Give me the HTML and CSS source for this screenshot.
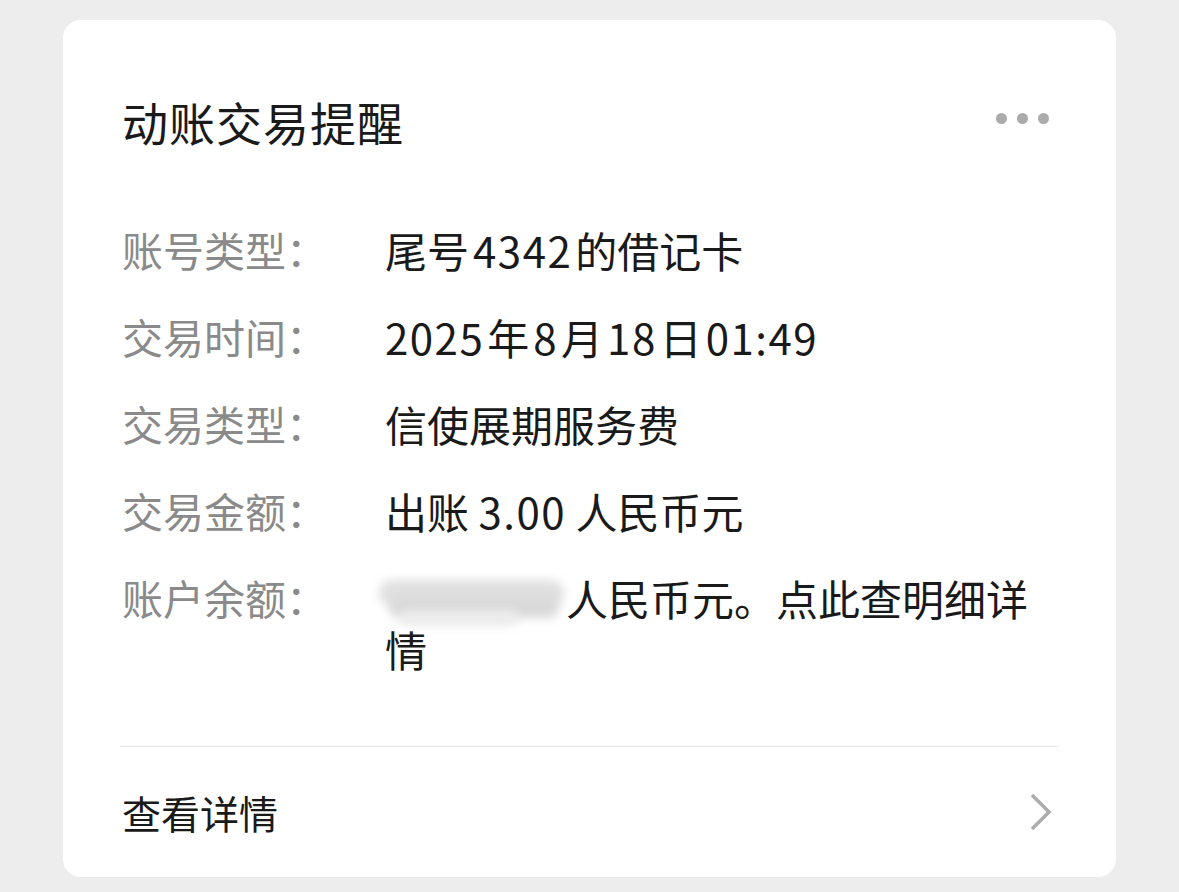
FILE: index.html
```html
<!DOCTYPE html>
<html lang="zh-CN">
<head>
<meta charset="utf-8">
<link rel="stylesheet" href="styles.css">
</head>
<body>
<div class="card">
  <div class="head">
    <div class="title">动账交易提醒</div>
    <div class="dots"><span></span><span></span><span></span></div>
  </div>
  <div class="rows">
    <div class="row"><div class="label">账号类型：</div><div class="value">尾号<span class="num">4342</span>的借记卡</div></div>
    <div class="row"><div class="label">交易时间：</div><div class="value"><span class="num first">2025</span>年<span class="num">8</span>月<span class="num">18</span>日<span class="num last">01:49</span></div></div>
    <div class="row"><div class="label">交易类型：</div><div class="value">信使展期服务费</div></div>
    <div class="row"><div class="label">交易金额：</div><div class="value">出账 <span class="num amt">3.00</span> 人民币元</div></div>
    <div class="row"><div class="label">账户余额：</div><div class="value"><span class="smudge"><i class="s1"></i><i class="s2"></i><i class="s3"></i></span>人民币元。点此查明细详情</div></div>
  </div>
  <div class="divider"></div>
  <div class="foot">
    <div class="more">查看详情</div>
    <svg class="chev" width="26" height="40" viewBox="0 0 26 40"><polyline points="4,3 21,20 4,37" fill="none" stroke="#adadad" stroke-width="3.6"/></svg>
  </div>
</div>
</body>
</html>
```
FILE: styles.css
```css
html, body { margin: 0; padding: 0; }
body {
  background: #ededed;
  font-family: "Noto Sans CJK SC", "Noto Sans", sans-serif;
  padding: 20px 63px 15px 63px;
}
.card {
  background: #fff;
  border-radius: 18px;
  height: 857px;
  box-sizing: border-box;
  padding: 71px 58px 0 59px;
  display: flex;
  flex-direction: column;
}
.head {
  display: flex;
  justify-content: space-between;
  align-items: center;
  height: 60px;
}
.title {
  font-size: 46px;
  line-height: 60px;
  color: #1a1a1a;
  letter-spacing: 1px;
}
.dots {
  display: flex;
  gap: 10px;
  margin-right: 9px;
  margin-top: -6px;
}
.dots span {
  width: 11px;
  height: 11px;
  border-radius: 50%;
  background: #ababab;
}
.rows {
  margin-top: 73px;
  display: flex;
  flex-direction: column;
  gap: 36px;
}
.row {
  display: flex;
  font-size: 42px;
  line-height: 51px;
}
.label {
  width: 263px;
  flex: none;
  color: #8a8a8a;
  font-size: 41px;
}
.value {
  flex: 1;
  color: #1a1a1a;
  padding-right: 20px;
}
.num {
  letter-spacing: 1.5px;
  margin: 0 3px 0 4px;
}
.num.first { margin-left: 0; }
.num.last { margin-right: 0; }
.num.amt { margin: 0; }
.smudge {
  display: inline-block;
  position: relative;
  width: 180px;
  height: 40px;
  margin-right: 7px;
  margin-left: -6px;
  vertical-align: -4px;
}
.smudge i {
  position: absolute;
  display: block;
  border-radius: 20px;
  filter: blur(5px);
}
.smudge .s1 { left: 0; top: 0; width: 185px; height: 26px; background: #e0e0e0; }
.smudge .s2 { left: 10px; top: 16px; width: 170px; height: 22px; background: #d9d9d9; }
.smudge .s3 { left: 20px; top: 30px; width: 120px; height: 16px; background: #ececec; }
.divider {
  margin-top: 72px;
  height: 1px;
  background: #e3e3e3;
  margin-left: -2px;
}
.foot {
  flex: 1;
  display: flex;
  justify-content: space-between;
  align-items: center;
}
.more {
  font-size: 39px;
  color: #1a1a1a;
  line-height: 50px;
}
.chev {
  margin-right: 4px;
}
```
